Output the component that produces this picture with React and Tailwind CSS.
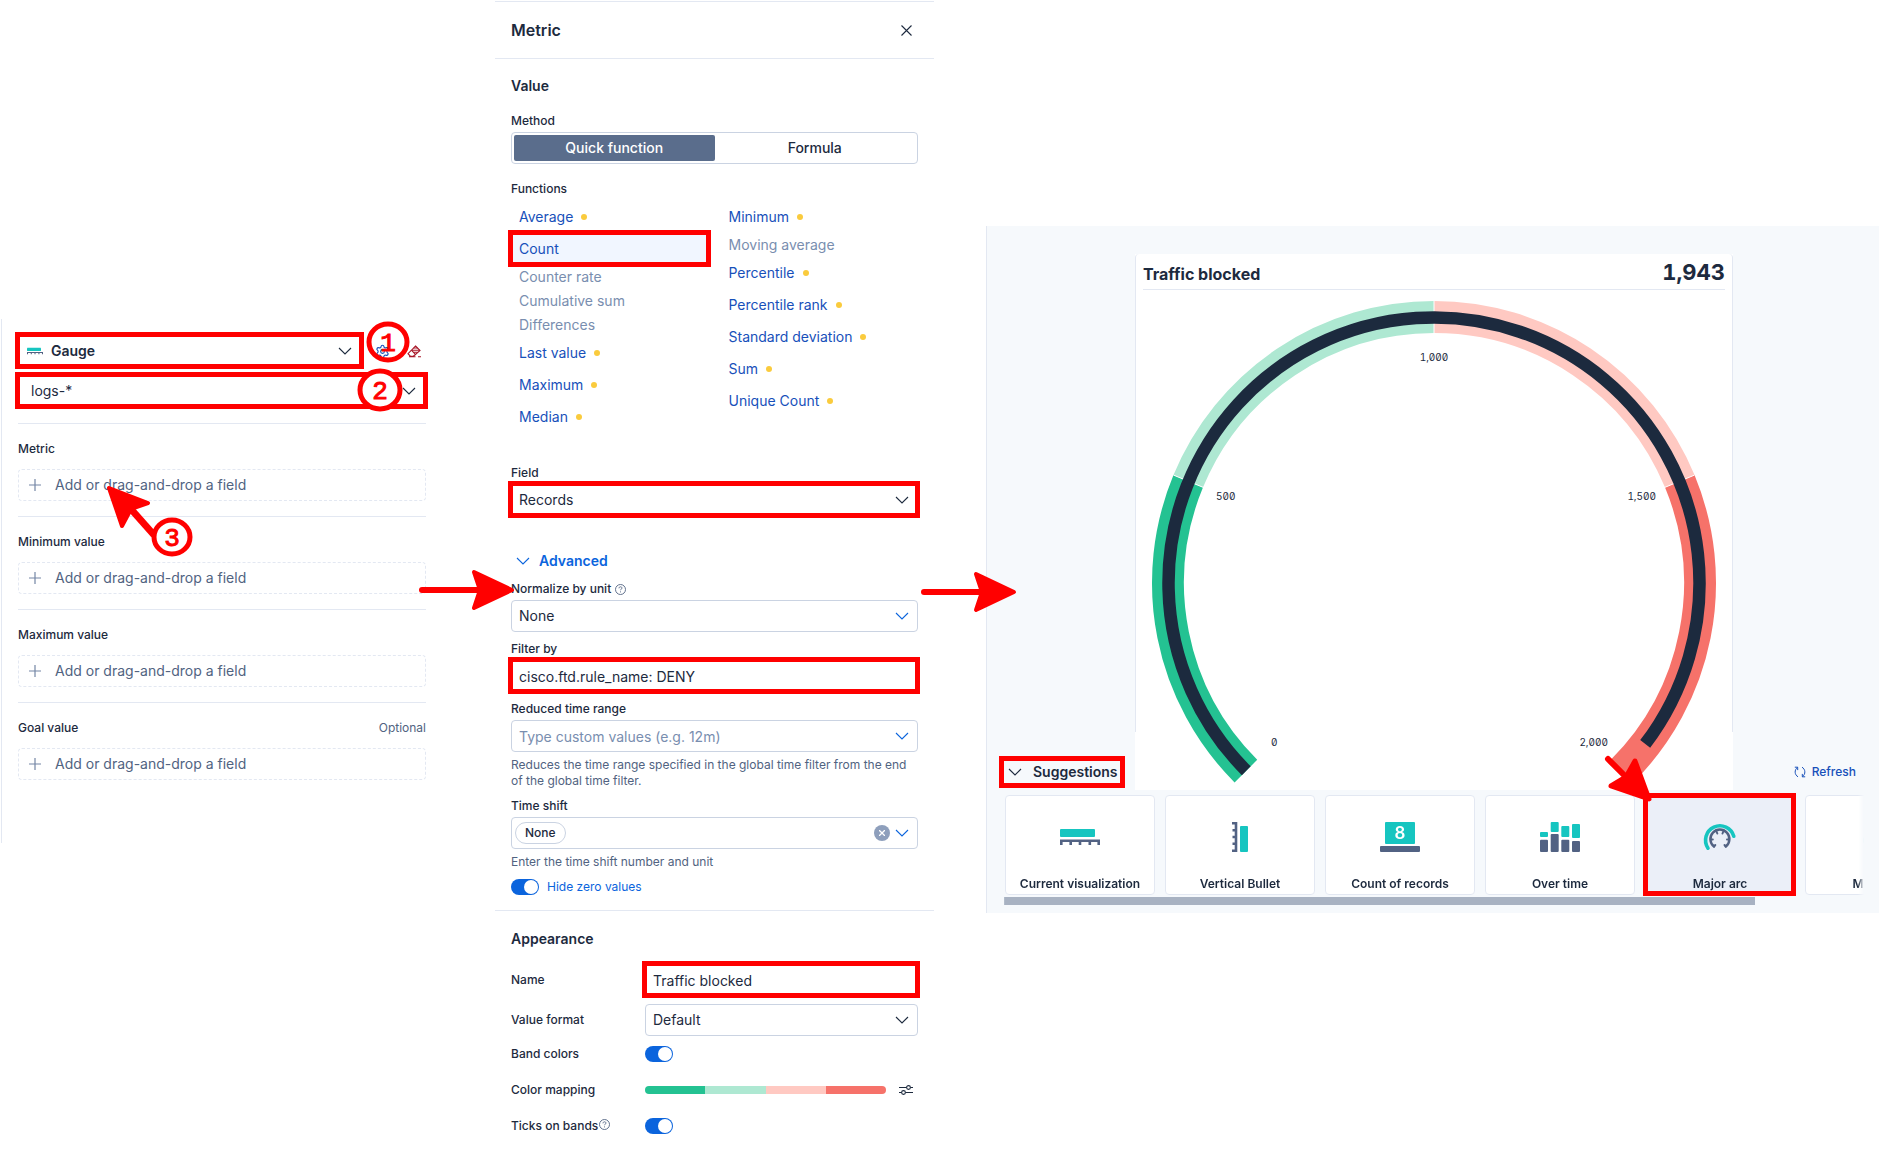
import { useState } from 'react';
import { Settings } from 'lucide-react';

const dropSections = [
  { title: 'Metric' },
  { title: 'Minimum value' },
  { title: 'Maximum value' },
  { title: 'Goal value', optional: true },
];

const leftFunctions = [
  { name: 'Average', dot: true },
  { name: 'Count', selected: true },
  { name: 'Counter rate', disabled: true },
  { name: 'Cumulative sum', disabled: true },
  { name: 'Differences', disabled: true },
  { name: 'Last value', dot: true },
  { name: 'Maximum', dot: true },
  { name: 'Median', dot: true },
];

const rightFunctions = [
  { name: 'Minimum', dot: true },
  { name: 'Moving average', disabled: true },
  { name: 'Percentile', dot: true },
  { name: 'Percentile rank', dot: true },
  { name: 'Standard deviation', dot: true },
  { name: 'Sum', dot: true },
  { name: 'Unique Count', dot: true },
];

// ---- annotations -------------------------------------------------------

// Red frame drawn over a highlighted control
function Highlight() {
  return (
    <span className="pointer-events-none absolute -top-[3px] -right-[2px] -bottom-[2px] -left-[3px] z-10 border-[5px] border-[#ff0000]" />
  );
}

function StepBadge({ n, r, filled, className }) {
  return (
    <svg width="46" height="44" viewBox="0 0 46 44" className={`pointer-events-none absolute z-20 ${className}`}>
      <ellipse cx="23" cy="22" rx={r} ry={r - 1} fill={filled ? '#fff' : 'none'} stroke="#ff0000" strokeWidth="5" />
      <text
        x="23"
        y="31"
        textAnchor="middle"
        fontFamily="'Liberation Mono', monospace"
        fontSize="26"
        fill="#ff0000"
        stroke="#ff0000"
        strokeWidth="1"
      >
        {n}
      </text>
    </svg>
  );
}

function RightArrow({ className }) {
  return (
    <svg width="98" height="44" viewBox="0 0 98 44" className={`pointer-events-none absolute z-20 ${className}`}>
      <path d="M4 22H62" stroke="#ff0000" strokeWidth="6" strokeLinecap="round" />
      <path d="M94 22L56 4L62 22L56 40Z" fill="#ff0000" stroke="#ff0000" strokeWidth="4" strokeLinejoin="round" />
    </svg>
  );
}

// ---- icons -------------------------------------------------------------

function Chevron({ className = '' }) {
  return (
    <svg width="14" height="8" viewBox="0 0 14 8" fill="none" className={className}>
      <path d="M1 1l6 6 6-6" stroke="currentColor" strokeWidth="1.1" />
    </svg>
  );
}

function HelpIcon({ className = '' }) {
  return (
    <svg width="11" height="11" viewBox="0 0 11 11" fill="none" stroke="#516381" strokeWidth="0.9" className={className}>
      <circle cx="5.5" cy="5.5" r="5" />
      <path d="M4 4.3c0-1 .7-1.5 1.5-1.5S7 3.3 7 4.1c0 1-1.5 1-1.5 2.100M5.500 7.400v1" />
    </svg>
  );
}

function EraserIcon() {
  return (
    <svg width="14" height="13" viewBox="0 0 14 13" fill="none" stroke="#a71627" strokeWidth="1.1">
      <path d="M8.500 1L13 5.500 8.500 9.500 4.500 5.200z" />
      <path d="M6.800 3h3.500M5 5.200h7.500M6.800 7.200h3.700" />
      <path d="M4.500 5.200L1 8.700l2.300 2.500h3l2.200-1.700M2 11.800h6.500M11 11.800h3" />
    </svg>
  );
}

function RefreshIcon() {
  return (
    <svg width="12" height="12" viewBox="0 0 12 12" fill="none" stroke="#1750ba" strokeWidth="1">
      <path d="M.8 1.200h2.900v2.900M3.500 1.400C.2 3.900.4 8.700 4 10.800" />
      <path d="M11.200 10.800H8.300V7.900M8.500 10.600c3.300-2.500 3.100-7.300-.5-9.400" />
    </svg>
  );
}

function ControlsIcon() {
  return (
    <svg width="14" height="12" viewBox="0 0 14 12" fill="none" stroke="#1d2a3e" strokeWidth="1.1">
      <path d="M0 3.500h7.500M11.500 3.500H14M0 8.500h2.500M6.500 8.500H14" />
      <circle cx="9.5" cy="3.5" r="1.9" />
      <circle cx="4.5" cy="8.5" r="1.9" />
    </svg>
  );
}

function BulletIcon({ className = 'h-[30px] w-10' }) {
  return (
    <svg viewBox="0 0 40 30" className={className}>
      <rect x="0" y="7" width="35" height="8" rx="1" fill="#16c5c0" />
      <path d="M1.300 23V18.700H38.700V23M10.700 18.700V23M20 18.700V23M29.800 18.700V23" fill="none" stroke="#526283" strokeWidth="2.6" />
    </svg>
  );
}

function VerticalBulletIcon() {
  return (
    <svg viewBox="0 0 40 30" className="h-[30px] w-10">
      <rect x="20" y="4" width="8" height="26" rx="1" fill="#16c5c0" />
      <path d="M12 1.300H16V28.700H12M16 8.200H12.500M16 15H12.500M16 21.800H12.500" fill="none" stroke="#526283" strokeWidth="2.6" />
    </svg>
  );
}

function MetricIcon() {
  return (
    <svg viewBox="0 0 40 30" className="h-[30px] w-10">
      <rect x="5" y="0" width="30" height="22" rx="1" fill="#16c5c0" />
      <rect x="0" y="24" width="40" height="6" rx="1" fill="#526283" />
      <text x="20" y="17" textAnchor="middle" fontFamily="Inter, sans-serif" fontSize="17" fontWeight="600" fill="#fff">
        8
      </text>
    </svg>
  );
}

function BarsIcon() {
  return (
    <svg viewBox="0 0 40 30" className="h-[30px] w-10">
      <g fill="#16c5c0">
        <rect x="0" y="10" width="8" height="5" rx="1" />
        <rect x="10.7" y="0" width="8" height="10" rx="1" />
        <rect x="21.3" y="4" width="8" height="11" rx="1" />
        <rect x="32" y="2" width="8" height="14" rx="1" />
      </g>
      <g fill="#526283">
        <rect x="0" y="17.7" width="8" height="12.3" rx="1" />
        <rect x="10.7" y="12" width="8" height="18" rx="1" />
        <rect x="21.3" y="17.7" width="8" height="12.3" rx="1" />
        <rect x="32" y="19" width="8" height="11" rx="1" />
      </g>
    </svg>
  );
}

function ArcIcon() {
  return (
    <svg viewBox="0 0 40 30" className="h-[30px] w-10" fill="none" strokeLinecap="round">
      <path d="M8 26.200A14.400 14.400 0 1 1 33.800 14.200" stroke="#16c5c0" strokeWidth="3.6" />
      <path d="M14 24.500A9.500 9.500 0 1 1 25.800 24.500" stroke="#526283" strokeWidth="2.4" />
      <path
        d="M14 24.500L15.300 23M25.800 24.500L24.500 23M10.800 17.500H12.800M29 17.500H27M16.500 9.500L17.300 11.500M23.300 9.500L22.500 11.500"
        stroke="#526283"
        strokeWidth="2"
      />
    </svg>
  );
}

const suggestions = [
  { title: 'Current visualization', Icon: BulletIcon },
  { title: 'Vertical Bullet', Icon: VerticalBulletIcon },
  { title: 'Count of records', Icon: MetricIcon },
  { title: 'Over time', Icon: BarsIcon },
  { title: 'Major arc', Icon: ArcIcon, active: true },
  { title: 'Minor arc', Icon: ArcIcon },
];

// ---- form controls -----------------------------------------------------

function Label({ htmlFor, children }) {
  return (
    <label htmlFor={htmlFor} className="flex h-4 items-center text-xs leading-4 font-medium">
      {children}
    </label>
  );
}

function SelectBox({ id, label, options, highlight, blue }) {
  return (
    <div className="relative">
      <select
        id={id}
        aria-label={label}
        className="block h-8 w-full appearance-none rounded border border-[#cad3e2] bg-white px-[7px] text-sm"
      >
        {options.map((o) => (
          <option key={o}>{o}</option>
        ))}
      </select>
      <Chevron className={`pointer-events-none absolute top-3 right-[9px] ${blue ? 'text-[#0b64dd]' : ''}`} />
      {highlight && <Highlight />}
    </div>
  );
}

function Switch({ id, label }) {
  return (
    <input
      id={id}
      type="checkbox"
      role="switch"
      aria-label={label}
      defaultChecked
      className="relative block h-4 w-7 appearance-none rounded-full bg-[#8e9fbc] before:absolute before:top-px before:left-px before:size-[14px] before:rounded-full before:bg-white checked:bg-[#0b64dd] checked:before:left-[13px]"
    />
  );
}

// ---- left panel --------------------------------------------------------

function LayerPanel() {
  return (
    <aside className="relative mt-[319px] ml-px w-[443px] shrink-0 border-l border-[#e3e8f2] px-4 pt-4 pb-12">
      <div className="mr-[2px]">
        <div className="flex items-center">
          <div className="relative flex-1">
            <select
              aria-label="Visualization type"
              className="block h-8 w-full appearance-none rounded border border-[#cad3e2] bg-white pl-8 text-sm font-semibold"
            >
              <option>Gauge</option>
            </select>
            <BulletIcon className="pointer-events-none absolute top-[10px] left-[9px] h-3 w-4" />
            <Chevron className="pointer-events-none absolute top-3 right-[10px]" />
            <Highlight />
          </div>
          <div className="-mr-1 ml-1 flex">
            <button aria-label="Settings" className="flex size-8 items-center justify-center text-[#1750ba]">
              <Settings size={15} strokeWidth={1.8} />
            </button>
            <button aria-label="Clear layer" className="flex size-8 items-center justify-center">
              <EraserIcon />
            </button>
          </div>
        </div>
        <div className="relative mt-2 mb-4">
          <select
            aria-label="Data view"
            className="block h-8 w-full appearance-none rounded border border-[#cad3e2] bg-white pl-3 text-sm"
          >
            <option>logs-*</option>
          </select>
          <Chevron className="pointer-events-none absolute top-3 right-[10px]" />
          <Highlight />
        </div>

        {dropSections.map((s) => (
          <section key={s.title} className="border-t border-[#e3e8f2] pt-[17px] pb-[15px]">
            <div className="mb-3 flex justify-between text-xs leading-4">
              <h3 className="font-medium">{s.title}</h3>
              {s.optional && <span className="text-[#516381]">Optional</span>}
            </div>
            <button className="flex h-8 w-full items-center gap-[14px] rounded border border-dashed border-[#e3e8f2] pl-[10px] text-sm text-[#516381]">
              <svg width="12" height="12" viewBox="0 0 12 12" stroke="#7486a5" strokeWidth="1.2">
                <path d="M6 0v12M0 6h12" />
              </svg>
              Add or drag-and-drop a field
            </button>
          </section>
        ))}
      </div>

      {/* Step markers */}
      <StepBadge n={1} r={19} className="top-px left-[363px]" />
      <StepBadge n={2} r={20} filled className="top-[49px] left-[355px]" />
      <svg width="54" height="56" viewBox="0 0 54 56" className="pointer-events-none absolute top-[164px] left-[102px] z-20">
        <path d="M26 25L50 52" stroke="#ff0000" strokeWidth="7" />
        <path d="M5 5L44 20L27 26L18 43Z" fill="#ff0000" stroke="#ff0000" strokeWidth="4" strokeLinejoin="round" />
      </svg>
      <StepBadge n={3} r={18} filled className="top-[196px] left-[147px]" />
      <RightArrow className="top-[249px] left-[416px]" />
    </aside>
  );
}

// ---- metric flyout -----------------------------------------------------

function FunctionList({ items }) {
  return (
    <ul className="flex-1">
      {items.map((f) => (
        <li key={f.name} className="relative">
          {f.disabled ? (
            <button disabled className="flex h-6 w-full items-center px-2 text-sm text-[#798eaf]">
              {f.name}
            </button>
          ) : (
            <button
              className={`flex h-8 w-full items-center gap-2 px-2 text-sm text-[#1750ba] ${
                f.selected ? 'bg-[#f1f6ff]' : ''
              }`}
            >
              {f.name}
              {f.dot && <span className="size-[6px] rounded-full bg-[#facb3d]" />}
            </button>
          )}
          {f.selected && <Highlight />}
        </li>
      ))}
    </ul>
  );
}

function MetricPanel() {
  const [method, setMethod] = useState('Quick function');

  return (
    <section className="relative mt-px ml-[51px] w-[439px] shrink-0 border-t border-[#e3e8f2]">
      <header className="flex h-[57px] items-center justify-between border-b border-[#e3e8f2] px-4">
        <h2 className="text-base font-semibold">Metric</h2>
        <button aria-label="Close" className="flex size-6 items-center justify-center">
          <svg width="11" height="11" viewBox="0 0 11 11" stroke="currentColor" strokeWidth="1.1">
            <path d="M.5.5l10 10M10.500.5l-10 10" />
          </svg>
        </button>
      </header>

      <div className="border-b border-[#e3e8f2] px-4 pt-4 pb-[15px]">
        <h3 className="mb-4 text-sm leading-[22px] font-semibold">Value</h3>
        <Label>Method</Label>
        <div className="mt-[3px] mb-[17px] flex h-8 rounded border border-[#cad3e2] p-[2px] text-sm font-medium">
          {['Quick function', 'Formula'].map((m) => (
            <button
              key={m}
              aria-pressed={method === m}
              onClick={() => setMethod(m)}
              className={`flex-1 rounded-xs ${method === m ? 'bg-[#5a6d8c] text-white' : ''}`}
            >
              {m}
            </button>
          ))}
        </div>

        <Label>Functions</Label>
        <div className="mt-1 mb-8 flex gap-3">
          <FunctionList items={leftFunctions} />
          <FunctionList items={rightFunctions} />
        </div>

        <Label htmlFor="field">Field</Label>
        <div className="mt-[3px] mb-[33px]">
          <SelectBox id="field" options={['Records']} highlight />
        </div>

        <button className="mb-2 flex h-6 items-center gap-[9px] pl-[5px] text-sm font-semibold text-[#0b64dd]">
          <Chevron />
          Advanced
        </button>

        <div className="space-y-[9px]">
          <div>
            <Label htmlFor="normalize">
              Normalize by unit
              <HelpIcon className="ml-1" />
            </Label>
            <div className="mt-[3px]">
              <SelectBox id="normalize" options={['None']} blue />
            </div>
          </div>
          <div>
            <Label htmlFor="filter">Filter by</Label>
            <div className="relative mt-[3px]">
              <input
                id="filter"
                defaultValue="cisco.ftd.rule_name: DENY"
                className="block h-8 w-full rounded border border-[#cad3e2] px-[7px] text-sm"
              />
              <Highlight />
            </div>
          </div>
          <div>
            <Label htmlFor="range">Reduced time range</Label>
            <div className="relative mt-[3px]">
              <input
                id="range"
                placeholder="Type custom values (e.g. 12m)"
                className="block h-8 w-full rounded border border-[#cad3e2] px-[7px] text-sm placeholder:text-[#798eaf]"
              />
              <Chevron className="pointer-events-none absolute top-3 right-[9px] text-[#0b64dd]" />
            </div>
            <p className="mt-[5px] text-xs leading-4 text-[#516381]">
              Reduces the time range specified in the global time filter from the end of the global time filter.
            </p>
          </div>
          <div>
            <Label htmlFor="shift">Time shift</Label>
            <div className="mt-[3px] flex h-8 items-center rounded border border-[#cad3e2] px-[3px] pr-2">
              <span className="flex h-[22px] items-center rounded-full border border-[#cad3e2] px-[9px] text-xs font-medium">
                None
              </span>
              <input id="shift" className="min-w-0 flex-1 px-1 text-sm outline-none" />
              <button aria-label="Clear" className="mr-[5px] flex size-4 items-center justify-center rounded-full bg-[#8e9fbc]">
                <svg width="6" height="6" viewBox="0 0 6 6" stroke="#fff" strokeWidth="1.3">
                  <path d="M0 0l6 6M6 0L0 6" />
                </svg>
              </button>
              <Chevron className="text-[#0b64dd]" />
            </div>
            <p className="mt-[5px] text-xs leading-4 text-[#516381]">Enter the time shift number and unit</p>
          </div>
          <div className="flex items-center gap-2">
            <Switch id="hide-zero" />
            <label htmlFor="hide-zero" className="text-xs leading-4 text-[#0b64dd]">
              Hide zero values
            </label>
          </div>
        </div>
      </div>

      <div className="px-4 pt-[17px] pb-6">
        <h3 className="mb-[14px] text-sm leading-[22px] font-semibold">Appearance</h3>
        <div className="grid grid-cols-[134px_1fr] items-center gap-y-2">
          <Label htmlFor="name">Name</Label>
          <div className="relative">
            <input
              id="name"
              defaultValue="Traffic blocked"
              className="block h-8 w-full rounded border border-[#cad3e2] px-[7px] text-sm"
            />
            <Highlight />
          </div>
          <Label htmlFor="format">Value format</Label>
          <SelectBox id="format" options={['Default']} />
        </div>
        <div className="mt-2 grid auto-rows-[20px] grid-cols-[134px_1fr] items-center gap-y-4">
          <Label htmlFor="bands">Band colors</Label>
          <Switch id="bands" />
          <Label>Color mapping</Label>
          <div className="flex items-center justify-between pr-[5px]">
            <div className="flex h-2 w-[241px] overflow-hidden rounded-full">
              <span className="flex-1 bg-[#24c292]" />
              <span className="flex-1 bg-[#aee8d2]" />
              <span className="flex-1 bg-[#ffc9c2]" />
              <span className="flex-1 bg-[#f6726a]" />
            </div>
            <button aria-label="Edit colors">
              <ControlsIcon />
            </button>
          </div>
          <Label htmlFor="ticks">
            Ticks on bands
            <HelpIcon className="mb-1 ml-px" />
          </Label>
          <Switch id="ticks" />
        </div>
      </div>

      <RightArrow className="top-[568px] left-[425px]" />
    </section>
  );
}

// ---- gauge -------------------------------------------------------------

const MAX = 2000;
const CX = 299;
const CY = 293;

// 270 degree sweep, with 0 at the lower left
function point(value, r) {
  const a = ((value / MAX) * 270 - 135) * (Math.PI / 180);
  return [CX + r * Math.sin(a), CY - r * Math.cos(a)];
}

function arc(from, to, r) {
  const [x1, y1] = point(from, r);
  const [x2, y2] = point(to, r);
  const large = ((to - from) / MAX) * 270 > 180 ? 1 : 0;
  return `M${x1} ${y1}A${r} ${r} 0 ${large} 1 ${x2} ${y2}`;
}

const bands = [
  { from: 0, to: 500, color: '#24c292' },
  { from: 500, to: 1000, color: '#aee8d2' },
  { from: 1000, to: 1500, color: '#ffc9c2' },
  { from: 1500, to: 2000, color: '#f6726a' },
];

function GaugeChart({ value }) {
  return (
    <svg viewBox="0 0 598 500" className="block w-full">
      {bands.map((b) => (
        <path key={b.from} d={arc(b.from, b.to, 266)} fill="none" stroke={b.color} strokeWidth="32" />
      ))}
      {[500, 1000, 1500].map((t) => {
        const [x1, y1] = point(t, 250);
        const [x2, y2] = point(t, 282);
        return <line key={t} x1={x1} y1={y1} x2={x2} y2={y2} stroke="#fff" strokeWidth="1" />;
      })}
      <path d={arc(0, value, 265.5)} fill="none" stroke="#1c2a3e" strokeWidth="12.5" />
      <g fontSize="10" fill="#1d2a3e" className="slashed-zero tabular-nums">
        <text x="299" y="71" textAnchor="middle">1,000</text>
        <text x="81" y="210">500</text>
        <text x="521" y="210" textAnchor="end">1,500</text>
        <text x="136" y="456">0</text>
        <text x="473" y="456" textAnchor="end">2,000</text>
      </g>
    </svg>
  );
}

function Workspace() {
  return (
    <main className="relative mt-[226px] ml-[52px] min-w-0 flex-1 border-l border-[#e3e8f2] bg-[#f6f9fc] pt-7 pb-2">
      <div className="pl-[2px]">
        <div className="relative mx-auto w-[598px] bg-white before:pointer-events-none before:absolute before:inset-x-0 before:top-0 before:h-[478px] before:rounded-t before:border-x before:border-[#e3e8f2]">
          <div className="mx-2 flex h-9 items-center justify-between border-b border-[#e3e8f2]">
            <h2 className="pt-1 text-base font-bold">Traffic blocked</h2>
            <span className="text-[22px] leading-8 font-bold tabular-nums">1,943</span>
          </div>
          <GaugeChart value={1943} />
        </div>
      </div>

      <div className="relative -mt-[34px] mr-[23px] ml-[15px] flex h-8 items-center justify-between">
        <button className="relative flex h-[27px] items-center gap-[11px] pr-[5px] pl-[6px] text-sm font-semibold">
          <Chevron />
          Suggestions
          <Highlight />
        </button>
        <button className="flex items-center gap-[6px] text-xs font-medium text-[#1750ba]">
          <RefreshIcon />
          Refresh
        </button>
      </div>

      <div className="relative mt-[3px] mr-[15px] ml-[14px] overflow-hidden [mask-image:linear-gradient(to_right,transparent,black_4px,black_calc(100%-6px),transparent)]">
        <div className="flex gap-[10px] pt-1 pb-[2px] pl-1">
          {suggestions.map((s) => (
            <button
              key={s.title}
              className={`relative flex h-[100px] w-[150px] shrink-0 flex-col items-center rounded border border-[#e3e8f2] ${
                s.active ? 'bg-[#ebeff8]' : 'bg-white'
              }`}
            >
              <span className="flex flex-1 items-center pt-1">
                <s.Icon />
              </span>
              <span className="text-xs leading-5 font-semibold">{s.title}</span>
              {s.active && <Highlight />}
            </button>
          ))}
        </div>
        <div className="ml-[3px] h-2 w-[87%] bg-[#a8b2c2]" />
      </div>

      <svg width="54" height="52" viewBox="0 0 54 52" className="pointer-events-none absolute top-[527px] left-[614px] z-20">
        <path d="M7 6L26 25" stroke="#ff0000" strokeWidth="6" strokeLinecap="round" />
        <path d="M48 46L10 33L25 24L34 8Z" fill="#ff0000" stroke="#ff0000" strokeWidth="5" strokeLinejoin="round" />
      </svg>
    </main>
  );
}

export default function App() {
  return (
    <div className="flex min-h-screen items-start overflow-hidden bg-white font-[Inter,sans-serif] text-[#1d2a3e]">
      <LayerPanel />
      <MetricPanel />
      <Workspace />
    </div>
  );
}
